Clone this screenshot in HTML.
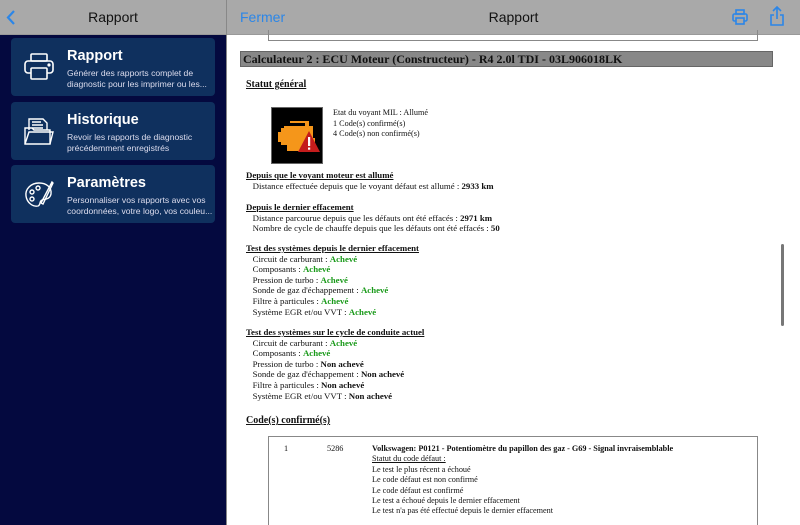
<!DOCTYPE html>
<html style="overflow:hidden;height:525px"><head><meta charset="utf-8"><style>
*{margin:0;padding:0;box-sizing:border-box}
body{width:800px;height:525px;overflow:hidden;position:relative;background:#fff;font-family:"Liberation Sans",sans-serif}
.side{position:absolute;left:0;top:0;width:226px;height:525px;background:#04093f}
.hdr{position:absolute;top:0;height:35px;background:#a9a9a9;border-bottom:1px solid #999}
.card{position:absolute;left:11px;width:204px;height:58px;background:#0f305e;border-radius:4px;color:#fff}
.card b{position:absolute;left:56px;top:10px;font-size:14.5px}
.card span{position:absolute;left:56px;top:30px;font-size:8.6px;line-height:10.5px;color:#dde}
.card svg{position:absolute;left:12px;top:14px}
.c{position:absolute;font-family:"Liberation Serif",serif;font-size:8.8px;color:#111;white-space:nowrap}
.u{font-weight:bold;text-decoration:underline}
.g{color:#1a9a1a;font-weight:bold}
</style></head><body>
<div class="side"></div>
<div class="hdr" style="left:0;width:226px"></div>
<div class="hdr" style="left:227px;width:573px"></div>
<div style="position:absolute;left:226px;top:0;width:1px;height:525px;background:#888"></div>
<svg style="position:absolute;left:5px;top:9px" width="12" height="17"><path d="M9 2L3 8.5L9 15" stroke="#2b86e8" stroke-width="2.2" fill="none"/></svg>
<div style="position:absolute;left:0;width:226px;top:9px;text-align:center;font-size:14px;color:#111">Rapport</div>
<div style="position:absolute;left:240px;top:9px;font-size:14px;color:#2b86e8">Fermer</div>
<div style="position:absolute;left:227px;width:573px;top:9px;text-align:center;font-size:14px;color:#111">Rapport</div>
<svg style="position:absolute;left:731px;top:8px" width="18" height="18" fill="none" stroke="#2b86e8" stroke-width="1.6"><rect x="5" y="2" width="8" height="4"/><rect x="2" y="6" width="14" height="7" rx="1.5"/><rect x="5" y="10" width="8" height="6" fill="#a9a9a9"/></svg>
<svg style="position:absolute;left:768px;top:5px" width="18" height="22" fill="none" stroke="#2b86e8" stroke-width="1.6"><path d="M9 2V14M5 6L9 2L13 6M6 10H3V20H15V10H12"/></svg>

<div class="card" style="top:38px"><svg width="32" height="30" fill="none" stroke="#fff" stroke-width="1.6"><rect x="8" y="2" width="16" height="7" rx="1"/><rect x="2" y="9" width="28" height="12" rx="3"/><rect x="8" y="16" width="16" height="11" rx="1" fill="#0f305e"/><circle cx="26" cy="13" r=".8" fill="#fff"/></svg><b>Rapport</b><span>Générer des rapports complet de<br>diagnostic pour les imprimer ou les...</span></div>
<div class="card" style="top:102px"><svg width="32" height="30" fill="none" stroke="#fff" stroke-width="1.4"><path d="M6 14V3H20L24 7V14M9 6H18M9 9H20M9 12H20"/><path d="M2 28V12H9L11 14H27V28Z"/><path d="M2 28L6 16H30L27 28"/></svg><b>Historique</b><span>Revoir les rapports de diagnostic<br>précédemment enregistrés</span></div>
<div class="card" style="top:165px"><svg width="32" height="32" fill="none" stroke="#fff" stroke-width="1.4"><path d="M16 4C8 4 2 10 3 17C4 24 10 28 15 27C18 26 16 22 19 21C23 20 27 20 28 15C29 8 23 4 16 4Z"/><circle cx="9" cy="13" r="2"/><circle cx="15" cy="9" r="2"/><circle cx="9" cy="20" r="2"/><path d="M29 3L18 24L20 25L30 4Z"/></svg><b>Paramètres</b><span>Personnaliser vos rapports avec vos<br>coordonnées, votre logo, vos couleu...</span></div>

<div style="position:absolute;left:268px;top:30px;width:490px;height:11px;border:1px solid #888;border-top:none"></div>
<div style="position:absolute;left:240px;top:51px;width:533px;height:16px;background:#888;border:1px solid #666"></div>
<div class="c" style="left:243px;top:52px;font-size:12px;font-weight:700">Calculateur 2 : ECU Moteur (Constructeur) - R4 2.0l TDI - 03L906018LK</div>
<div class="c u" style="left:246px;top:79px;font-size:10px">Statut général</div>
<div style="position:absolute;left:271px;top:107px;width:52px;height:57px;background:#000;border:1px solid #666"></div>
<svg style="position:absolute;left:275px;top:118px" width="46" height="36"><path d="M9 8H30V5H15V3H34V8H38V20H40V30H34V33H12V27H6V24H3V14H6V10H9Z" fill="#f5961a"/><path d="M34 13L45 34H23Z" fill="#c41c1c"/><rect x="33" y="19" width="2.2" height="9" fill="#fff"/><rect x="33" y="29.5" width="2.2" height="2.2" fill="#fff"/></svg>
<div class="c" style="left:333px;top:108px;line-height:10.6px;font-size:8.2px">Etat du voyant MIL : Allumé<br>1 Code(s) confirmé(s)<br>4 Code(s) non confirmé(s)</div>
<div class="c" style="left:246px;top:170px;line-height:10.6px"><span class="u">Depuis que le voyant moteur est allumé</span><br>&nbsp;&nbsp;&nbsp;Distance effectuée depuis que le voyant défaut est allumé : <b>2933 km</b></div>
<div class="c" style="left:246px;top:202px;line-height:10.6px"><span class="u">Depuis le dernier effacement</span><br>&nbsp;&nbsp;&nbsp;Distance parcourue depuis que les défauts ont été effacés : <b>2971 km</b><br>&nbsp;&nbsp;&nbsp;Nombre de cycle de chauffe depuis que les défauts ont été effacés : <b>50</b></div>
<div class="c" style="left:246px;top:243px;line-height:10.6px"><span class="u">Test des systèmes depuis le dernier effacement</span><br>&nbsp;&nbsp;&nbsp;Circuit de carburant : <span class="g">Achevé</span><br>&nbsp;&nbsp;&nbsp;Composants : <span class="g">Achevé</span><br>&nbsp;&nbsp;&nbsp;Pression de turbo : <span class="g">Achevé</span><br>&nbsp;&nbsp;&nbsp;Sonde de gaz d'échappement : <span class="g">Achevé</span><br>&nbsp;&nbsp;&nbsp;Filtre à particules : <span class="g">Achevé</span><br>&nbsp;&nbsp;&nbsp;Système EGR et/ou VVT : <span class="g">Achevé</span></div>
<div class="c" style="left:246px;top:327px;line-height:10.6px"><span class="u">Test des systèmes sur le cycle de conduite actuel</span><br>&nbsp;&nbsp;&nbsp;Circuit de carburant : <span class="g">Achevé</span><br>&nbsp;&nbsp;&nbsp;Composants : <span class="g">Achevé</span><br>&nbsp;&nbsp;&nbsp;Pression de turbo : <b>Non achevé</b><br>&nbsp;&nbsp;&nbsp;Sonde de gaz d'échappement : <b>Non achevé</b><br>&nbsp;&nbsp;&nbsp;Filtre à particules : <b>Non achevé</b><br>&nbsp;&nbsp;&nbsp;Système EGR et/ou VVT : <b>Non achevé</b></div>
<div class="c u" style="left:246px;top:415px;font-size:10px">Code(s) confirmé(s)</div>
<div style="position:absolute;left:268px;top:436px;width:490px;height:89px;border:1px solid #888;border-bottom:none"></div>
<div class="c" style="left:284px;top:444px;font-size:8.2px">1</div>
<div class="c" style="left:327px;top:444px;font-size:8.2px">5286</div>
<div class="c" style="left:372px;top:444px;line-height:10.4px;font-size:8.2px;height:80px;overflow:hidden"><b>Volkswagen: P0121 - Potentiomètre du papillon des gaz - G69 - Signal invraisemblable</b><br><u>Statut du code défaut :</u><br>Le test le plus récent a échoué<br>Le code défaut est non confirmé<br>Le code défaut est confirmé<br>Le test a échoué depuis le dernier effacement<br>Le test n'a pas été effectué depuis le dernier effacement</div>
<div style="position:absolute;left:781px;top:244px;width:3px;height:82px;background:#777;border-radius:2px"></div>
</body></html>
